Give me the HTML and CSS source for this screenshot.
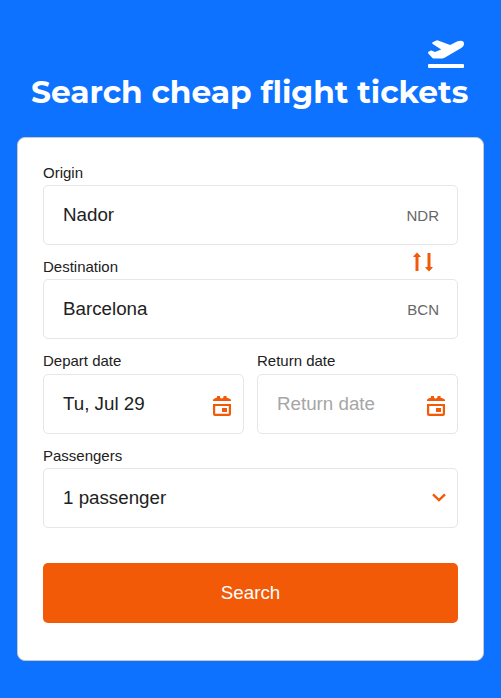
FILE: index.html
```
<!DOCTYPE html>
<html lang="en">
  <head>
    <meta charset="UTF-8">
    <title>Search cheap flight tickets</title>
    <link rel="stylesheet" href="styles.css">
  </head>
  <body>
    <header class="header">
      <svg class="plane" viewBox="0 0 38 30">
        <path fill="#fff" d="M5.6 2.2 L9.4 .5 Q10.2 .2 11 .5 L23.2 5 L30 1.6 C33.5 .1 37.4 .6 37 4 C36.6 6.6 35.2 7.4 33.4 8.6 L17.6 17.8 Q16.4 18.6 15 18.6 H7.4 Q6.2 18.6 5.4 17.9 L1.3 13.6 Q.4 12.4 1.5 11.7 L3.3 10.7 Q4.2 10.3 5.1 10.7 L8 12 L14.2 9.4 L5.7 4 Q4.5 3 5.6 2.2 Z"/>
        <rect x="1" y="24" width="36" height="4" rx="1" fill="#fff"/>
      </svg>
      <h1 class="title">Search cheap flight tickets</h1>
    </header>
    <form class="card">
      <div class="field">
        <label class="label">Origin</label>
        <div class="box">
          <span>Nador</span>
          <span class="code">NDR</span>
        </div>
      </div>
      <div class="field">
        <div class="labelRow">
          <label class="label">Destination</label>
          <svg class="swap" viewBox="0 0 20 20">
            <path d="M4 19 V3 M16 1 V17" fill="none" stroke="#f25a08" stroke-width="3"/>
            <path d="M4 .6 L7.6 4.2 V5 H.4 V4.2 Z M16 19.5 L12.4 15.8 V15 H19.6 V15.8 Z" fill="#f25a08"/>
          </svg>
        </div>
        <div class="box">
          <span>Barcelona</span>
          <span class="code">BCN</span>
        </div>
      </div>
      <div class="dates">
        <div class="field">
          <label class="label">Depart date</label>
          <div class="box dateBox">
            <span>Tu, Jul 29</span>
            <svg class="calendar" viewBox="0 0 18 20">
              <path fill="#f25a08" d="M0 5 V4 Q0 3 1.5 2.4 L4 1.6 V0 H7 V1.6 L8 2.4 H9 L10.5 1.6 V0 H13.5 V1.6 L16 2.4 Q18 3 18 4 V5 Z"/>
              <path fill="#f25a08" fill-rule="evenodd" d="M0 8 H18 V18 Q18 20 16 20 H2 Q0 20 0 18 Z M2.2 10 V17.8 H15.8 V10 Z"/>
              <rect x="9" y="12" width="5" height="4" fill="#f25a08"/>
            </svg>
          </div>
        </div>
        <div class="field">
          <label class="label">Return date</label>
          <div class="box dateBox">
            <span class="placeholder">Return date</span>
            <svg class="calendar" viewBox="0 0 18 20">
              <path fill="#f25a08" d="M0 5 V4 Q0 3 1.5 2.4 L4 1.6 V0 H7 V1.6 L8 2.4 H9 L10.5 1.6 V0 H13.5 V1.6 L16 2.4 Q18 3 18 4 V5 Z"/>
              <path fill="#f25a08" fill-rule="evenodd" d="M0 8 H18 V18 Q18 20 16 20 H2 Q0 20 0 18 Z M2.2 10 V17.8 H15.8 V10 Z"/>
              <rect x="9" y="12" width="5" height="4" fill="#f25a08"/>
            </svg>
          </div>
        </div>
      </div>
      <div class="field">
        <label class="label">Passengers</label>
        <div class="box selectBox">
          <span>1 passenger</span>
          <svg class="chevron" viewBox="0 0 14 9">
            <path d="M1 1.3 L7 7 L13 1.3" fill="none" stroke="#f25a08" stroke-width="2.4"/>
          </svg>
        </div>
      </div>
      <button class="button" type="button">Search</button>
    </form>
  </body>
</html>
```

FILE: styles.css
```
* {
  box-sizing: border-box;
}

body {
  margin: 0;
  min-height: 698px;
  padding: 39px 17px 37px;
  background-color: #0d72ff;
  font-family: Arial, "Liberation Sans", sans-serif;
  color: #212121;
}

.header {
  display: flex;
  flex-direction: column;
  height: 98px;
}

.plane {
  width: 38px;
  height: 30px;
  margin: 1px 19px 0 0;
  align-self: flex-end;
}

.title {
  margin: 2px 0 0 14px;
  color: #fff;
  font-family: Montserrat, Inter, sans-serif;
  font-size: 31.25px;
  font-weight: 700;
  line-height: 40px;
  white-space: nowrap;
}

.card {
  height: 524px;
  padding: 23px 25px 0;
  border: 1px solid #c8c8c8;
  border-radius: 8px;
  background-color: #fff;
}

.field {
  height: 94.25px;
}

.label {
  display: block;
  height: 24px;
  font-size: 15px;
  line-height: 24px;
}

.labelRow {
  display: flex;
  justify-content: space-between;
  height: 24px;
}

.swap {
  width: 20px;
  height: 20px;
  margin: -3px 25px 0 0;
}

.box {
  display: flex;
  align-items: center;
  justify-content: space-between;
  height: 60px;
  padding: 0 18px 0 19px;
  border: 1px solid #e6e6e6;
  border-radius: 5px;
  font-size: 18.75px;
}

.code {
  color: #666;
  font-size: 15px;
}

.dates {
  display: grid;
  grid-template-columns: 1fr 1fr;
  column-gap: 13px;
}

.dates .label {
  line-height: 22px;
}

.dateBox {
  padding-right: 12px;
}

.placeholder {
  color: #a6a6a6;
}

.calendar {
  width: 18px;
  height: 20px;
  margin-top: 4px;
}

.selectBox {
  padding-right: 11px;
}

.chevron {
  width: 14px;
  height: 9px;
}

.button {
  display: block;
  width: 100%;
  height: 60px;
  margin-top: 25px;
  padding: 0;
  border: none;
  border-radius: 5px;
  background-color: #f25a08;
  color: #fff;
  font-family: inherit;
  font-size: 18.75px;
  cursor: pointer;
}
```
